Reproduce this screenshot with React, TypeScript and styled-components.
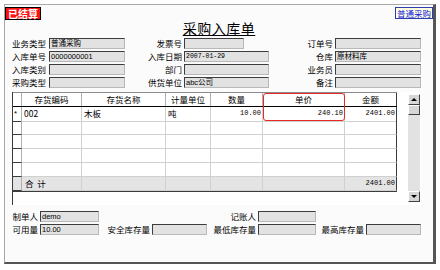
import styled, { createGlobalStyle } from "styled-components";

const GlobalStyle = createGlobalStyle`
  html, body {
    margin: 0;
    padding: 0;
    background: #ffffff;
  }
  body {
    font-family: "Noto Sans CJK SC", "Liberation Sans", sans-serif;
    color: #000;
  }
`;

const columns = [
  { key: "sel", width: 9, title: "" },
  { key: "code", width: 60, title: "存货编码" },
  { key: "name", width: 84, title: "存货名称" },
  { key: "unit", width: 45, title: "计量单位" },
  { key: "qty", width: 52, title: "数量" },
  { key: "price", width: 82, title: "单价" },
  { key: "amount", width: 52, title: "金额" },
];

const gridCols = columns.map((c) => `${c.width}px`).join(" ");

const App = () => {
  const emptyRows = [1, 2, 3, 4];

  return (
    <>
      <GlobalStyle />
      <Window>
        <Header>
          <Stamp>已结算</Stamp>
          <Title>采购入库单</Title>
          <Badge>普通采购</Badge>
        </Header>

        <FormGrid>
          <Label>业务类型</Label>
          <Field>普通采购</Field>
          <Label $right>发票号</Label>
          <Field $w={60} />
          <Label $right>订单号</Label>
          <Field />

          <Label>入库单号</Label>
          <Field>0000000001</Field>
          <Label $right>入库日期</Label>
          <Field $mono>2007-01-29</Field>
          <Label $right>仓库</Label>
          <Field>原材料库</Field>

          <Label>入库类别</Label>
          <Field />
          <Label $right>部门</Label>
          <Field />
          <Label $right>业务员</Label>
          <Field />

          <Label>采购类型</Label>
          <Field />
          <Label $right>供货单位</Label>
          <Field>abc公司</Field>
          <Label $right>备注</Label>
          <Field />
        </FormGrid>

        <GridPanel>
          <Table>
            <HeadRow>
              {columns.map((c) => (
                <HeadCell key={c.key}>{c.title}</HeadCell>
              ))}
            </HeadRow>
            <Row>
              <SelCell>*</SelCell>
              <Cell>002</Cell>
              <Cell>木板</Cell>
              <Cell>吨</Cell>
              <Cell $num>10.00</Cell>
              <Cell $num>240.10</Cell>
              <Cell $num>2401.00</Cell>
            </Row>
            {emptyRows.map((r) => (
              <Row key={r}>
                <SelCell />
                <Cell />
                <Cell />
                <Cell />
                <Cell />
                <Cell />
                <Cell />
              </Row>
            ))}
            <Row $total>
              <SelCell />
              <Cell $pad={3}>合&nbsp;&nbsp;计</Cell>
              <Cell />
              <Cell />
              <Cell />
              <Cell />
              <Cell $num>2401.00</Cell>
            </Row>
          </Table>
          <Focus />
          <ScrollBar>
            <ScrollButton>
              <ArrowUp />
            </ScrollButton>
            <Thumb />
            <Track />
            <ScrollButton>
              <ArrowDown />
            </ScrollButton>
          </ScrollBar>
        </GridPanel>

        <FooterGrid>
          <Label $right>制单人</Label>
          <Field>demo</Field>
          <span />
          <span />
          <Label $right>记账人</Label>
          <Field />
          <span />
          <span />

          <Label $right>可用量</Label>
          <Field>10.00</Field>
          <Label $right>安全库存量</Label>
          <Field />
          <Label $right>最低库存量</Label>
          <Field />
          <Label $right>最高库存量</Label>
          <Field />
        </FooterGrid>
      </Window>
    </>
  );
};

const Window = styled.div`
  box-sizing: border-box;
  margin: 4px 0 0 4px;
  width: 432px;
  height: 260px;
  background: #fbfbfb;
  border-top: 1px solid #a8a8a8;
  border-left: 1px solid #a8a8a8;
  border-right: 3px solid #555555;
  border-bottom: 2px solid #555555;
  display: flex;
  flex-direction: column;
`;

const Header = styled.div`
  display: grid;
  grid-template-columns: 1fr auto 1fr;
  align-items: start;
  height: 33px;
`;

const Stamp = styled.div`
  justify-self: start;
  box-sizing: border-box;
  margin-top: 2px;
  width: 36px;
  height: 13px;
  background: #ff1010;
  border: 1px solid #000;
  color: #ffffff;
  font-size: 10px;
  line-height: 11px;
  font-weight: 700;
  text-align: center;
  letter-spacing: 0px;
`;

const Title = styled.div`
  margin-top: 16px;
  font-size: 14px;
  line-height: 14px;
  letter-spacing: 0.5px;
  text-decoration: underline;
  text-underline-offset: 1px;
`;

const Badge = styled.div`
  justify-self: end;
  box-sizing: border-box;
  margin-top: 2px;
  height: 12px;
  padding: 0 1px;
  background: #ffffe0;
  border: 1px solid #2b3fb0;
  color: #1020e0;
  font-size: 8.5px;
  line-height: 10px;
`;

const FormGrid = styled.div`
  display: grid;
  grid-template-columns: 37px 76px 59px 85px 66px 86px;
  grid-auto-rows: 11px;
  row-gap: 2px;
  padding-left: 7px;
`;

const Label = styled.span<{ $right?: boolean }>`
  font-size: 8.5px;
  line-height: 11px;
  white-space: nowrap;
  text-align: ${(p) => (p.$right ? "right" : "left")};
  padding-right: ${(p) => (p.$right ? "2px" : "0")};
`;

const Field = styled.span<{ $w?: number; $mono?: boolean }>`
  box-sizing: border-box;
  display: block;
  width: ${(p) => (p.$w ? `${p.$w}px` : "100%")};
  height: 11px;
  background: #e2e2e2;
  border-top: 1px solid #3c3c3c;
  border-left: 1px solid #3c3c3c;
  border-right: 1px solid #b8b8b8;
  border-bottom: 1px solid #b8b8b8;
  padding-left: 1px;
  font-family: ${(p) =>
    p.$mono ? `"Liberation Mono", monospace` : `"Liberation Sans", "Noto Sans CJK SC", sans-serif`};
  font-size: ${(p) => (p.$mono ? "6.5px" : "7.5px")};
  line-height: 9px;
  white-space: nowrap;
  overflow: hidden;
`;

const GridPanel = styled.div`
  position: relative;
  box-sizing: border-box;
  margin: 4px 0 0 7px;
  width: 409px;
  height: 113px;
  background: #ffffff;
  border-left: 1px solid #3c3c3c;
  display: flex;
  align-items: flex-start;
`;

const Table = styled.div`
  border-top: 1px solid #8c8c8c;
  border-bottom: 1px solid #3c3c3c;
  font-size: 8.5px;
`;

const HeadRow = styled.div`
  display: grid;
  grid-template-columns: ${gridCols};
  height: 14px;
  box-sizing: border-box;
  border-bottom: 1px solid #000;
`;

const HeadCell = styled.div`
  box-sizing: border-box;
  border-right: 1px solid #b0b0b0;
  text-align: center;
  line-height: 13px;
  white-space: nowrap;
  &:last-child {
    border-right-color: #3c3c3c;
  }
`;

const Row = styled.div<{ $total?: boolean }>`
  display: grid;
  grid-template-columns: ${gridCols};
  height: 14px;
  background: ${(p) => (p.$total ? "#e4e4e4" : "#ffffff")};
`;

const SelCell = styled.div`
  box-sizing: border-box;
  border-right: 1px solid #b0b0b0;
  border-bottom: 1px solid #3c3c3c;
  font-family: "Liberation Sans", sans-serif;
  font-size: 8px;
  line-height: 14px;
  padding-left: 1px;
`;

const Cell = styled.div<{ $num?: boolean; $pad?: number }>`
  box-sizing: border-box;
  border-right: 1px solid #d0d0d0;
  border-bottom: 1px solid #d0d0d0;
  line-height: 13px;
  white-space: nowrap;
  overflow: hidden;
  padding: ${(p) => (p.$num ? "0 1px 0 0" : `0 0 0 ${p.$pad ?? 2}px`)};
  text-align: ${(p) => (p.$num ? "right" : "left")};
  font-family: ${(p) =>
    p.$num ? `"Liberation Mono", monospace` : `"Noto Sans CJK SC", "Liberation Sans", sans-serif`};
  font-size: ${(p) => (p.$num ? "7px" : "8.5px")};
  &:last-child {
    border-right-color: #3c3c3c;
  }
`;

const Focus = styled.div`
  position: absolute;
  left: 250px;
  top: 1px;
  width: 82px;
  height: 28px;
  box-sizing: border-box;
  border: 1px solid #e82828;
  border-radius: 3px;
  pointer-events: none;
`;

const ScrollBar = styled.div`
  margin: 2px 1px 0 auto;
  width: 12px;
  height: 108px;
  display: flex;
  flex-direction: column;
  background: #e0e0e0;
`;

const ScrollButton = styled.div`
  box-sizing: border-box;
  height: 11px;
  background: #d6d6d6;
  border-top: 1px solid #ffffff;
  border-left: 1px solid #ffffff;
  border-right: 1px solid #404040;
  border-bottom: 1px solid #404040;
  display: flex;
  align-items: center;
  justify-content: center;
`;

const Thumb = styled(ScrollButton)`
  height: 10px;
`;

const Track = styled.div`
  flex: 1;
  background: #e2e2e2;
`;

const ArrowUp = styled.span`
  width: 0;
  height: 0;
  border-left: 3px solid transparent;
  border-right: 3px solid transparent;
  border-bottom: 3px solid #000;
`;

const ArrowDown = styled.span`
  width: 0;
  height: 0;
  border-left: 3px solid transparent;
  border-right: 3px solid transparent;
  border-top: 3px solid #000;
`;

const FooterGrid = styled.div`
  display: grid;
  grid-template-columns: 28px 59px 53px 55px 51px 58px 50px 55px;
  grid-auto-rows: 11px;
  row-gap: 2px;
  margin-top: 6px;
  padding-left: 7px;
`;

export default App;
